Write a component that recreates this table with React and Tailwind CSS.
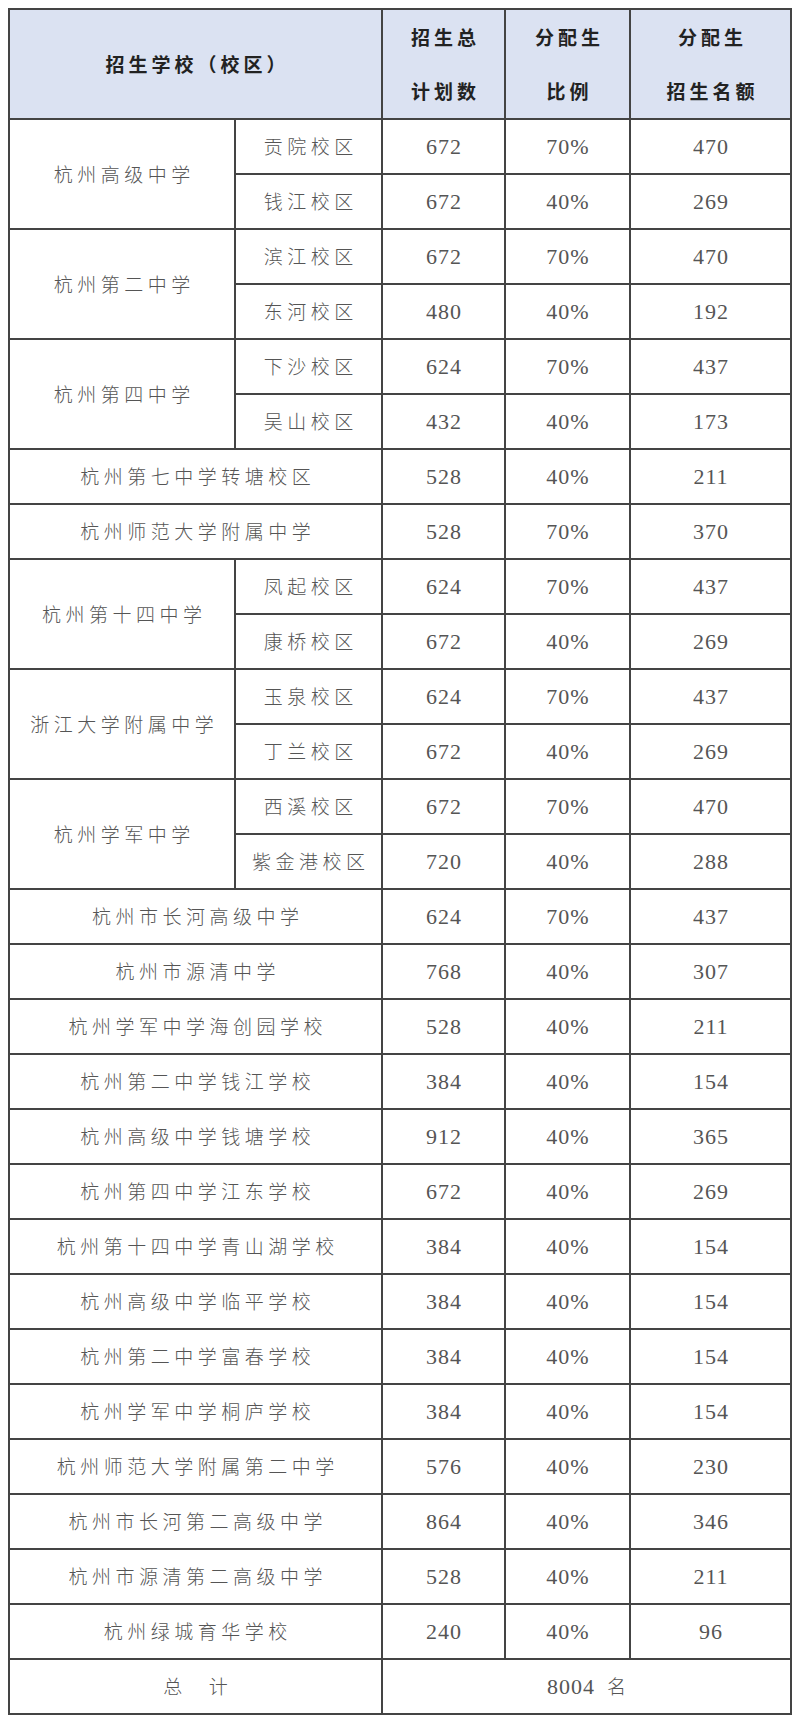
import React from "react";

const groups = [
  { name: "杭州高级中学", rows: [["贡院校区", "672", "70%", "470"], ["钱江校区", "672", "40%", "269"]] },
  { name: "杭州第二中学", rows: [["滨江校区", "672", "70%", "470"], ["东河校区", "480", "40%", "192"]] },
  { name: "杭州第四中学", rows: [["下沙校区", "624", "70%", "437"], ["吴山校区", "432", "40%", "173"]] },
  { name: "杭州第七中学转塘校区", single: ["528", "40%", "211"] },
  { name: "杭州师范大学附属中学", single: ["528", "70%", "370"] },
  { name: "杭州第十四中学", rows: [["凤起校区", "624", "70%", "437"], ["康桥校区", "672", "40%", "269"]] },
  { name: "浙江大学附属中学", rows: [["玉泉校区", "624", "70%", "437"], ["丁兰校区", "672", "40%", "269"]] },
  { name: "杭州学军中学", rows: [["西溪校区", "672", "70%", "470"], ["紫金港校区", "720", "40%", "288"]] },
  { name: "杭州市长河高级中学", single: ["624", "70%", "437"] },
  { name: "杭州市源清中学", single: ["768", "40%", "307"] },
  { name: "杭州学军中学海创园学校", single: ["528", "40%", "211"] },
  { name: "杭州第二中学钱江学校", single: ["384", "40%", "154"] },
  { name: "杭州高级中学钱塘学校", single: ["912", "40%", "365"] },
  { name: "杭州第四中学江东学校", single: ["672", "40%", "269"] },
  { name: "杭州第十四中学青山湖学校", single: ["384", "40%", "154"] },
  { name: "杭州高级中学临平学校", single: ["384", "40%", "154"] },
  { name: "杭州第二中学富春学校", single: ["384", "40%", "154"] },
  { name: "杭州学军中学桐庐学校", single: ["384", "40%", "154"] },
  { name: "杭州师范大学附属第二中学", single: ["576", "40%", "230"] },
  { name: "杭州市长河第二高级中学", single: ["864", "40%", "346"] },
  { name: "杭州市源清第二高级中学", single: ["528", "40%", "211"] },
  { name: "杭州绿城育华学校", single: ["240", "40%", "96"] },
];

const td = "border-2 border-[#444] text-center align-middle p-0";
const cjkText =
  "font-['Noto_Sans_CJK_SC','Noto_Sans',sans-serif] text-[19px] font-light tracking-[4.5px] pl-[4.5px] text-[#555]";
const numText =
  "font-['Liberation_Serif','Noto_Sans_CJK_SC',serif] text-[22px] tracking-[1px] pl-[1px] text-[#555]";
const headText =
  "font-['Noto_Sans_CJK_SC','Noto_Sans',sans-serif] text-[19px] font-semibold tracking-[4px] pl-[4px] leading-[54px] text-[#222]";

function NumCells({ v }) {
  return (
    <>
      <td className={`${td} ${numText}`}>{v[0]}</td>
      <td className={`${td} ${numText}`}>{v[1]}</td>
      <td className={`${td} ${numText}`}>{v[2]}</td>
    </>
  );
}

export default function App() {
  const body = [];
  groups.forEach((g, gi) => {
    if (g.single) {
      body.push(
        <tr key={gi} className="h-[55px]">
          <td colSpan={2} className={`${td} ${cjkText}`}>{g.name}</td>
          <NumCells v={g.single} />
        </tr>
      );
    } else {
      g.rows.forEach((r, ri) => {
        body.push(
          <tr key={`${gi}-${ri}`} className="h-[55px]">
            {ri === 0 && (
              <td rowSpan={2} className={`${td} ${cjkText}`}>{g.name}</td>
            )}
            <td className={`${td} ${cjkText}`}>{r[0]}</td>
            <NumCells v={r.slice(1)} />
          </tr>
        );
      });
    }
  });

  return (
    <div className="w-[800px] h-[1722px] bg-white pt-[8px] pl-[8px]">
      <table className="table-fixed border-collapse w-[782px] border-2 border-[#666]">
        <colgroup>
          <col className="w-[226px]" />
          <col className="w-[147px]" />
          <col className="w-[123px]" />
          <col className="w-[125px]" />
          <col className="w-[161px]" />
        </colgroup>
        <thead>
          <tr className="h-[108px] bg-[#dbe2f2]">
            <th colSpan={2} className={`${td} ${headText}`}>
              招生学校（校区）
            </th>
            <th className={`${td} ${headText}`}>
              招生总<br />计划数
            </th>
            <th className={`${td} ${headText}`}>
              分配生<br />比例
            </th>
            <th className={`${td} ${headText}`}>
              分配生<br />招生名额
            </th>
          </tr>
        </thead>
        <tbody>
          {body}
          <tr className="h-[55px]">
            <td colSpan={2} className={`${td} ${cjkText}`}>
              总<span className="inline-block w-[22px]"></span>计
            </td>
            <td colSpan={3} className={`${td} ${numText}`}>
              8004
              <span className="font-['Noto_Sans_CJK_SC',sans-serif] text-[19px] font-light pl-[12px]">名</span>
            </td>
          </tr>
        </tbody>
      </table>
    </div>
  );
}
